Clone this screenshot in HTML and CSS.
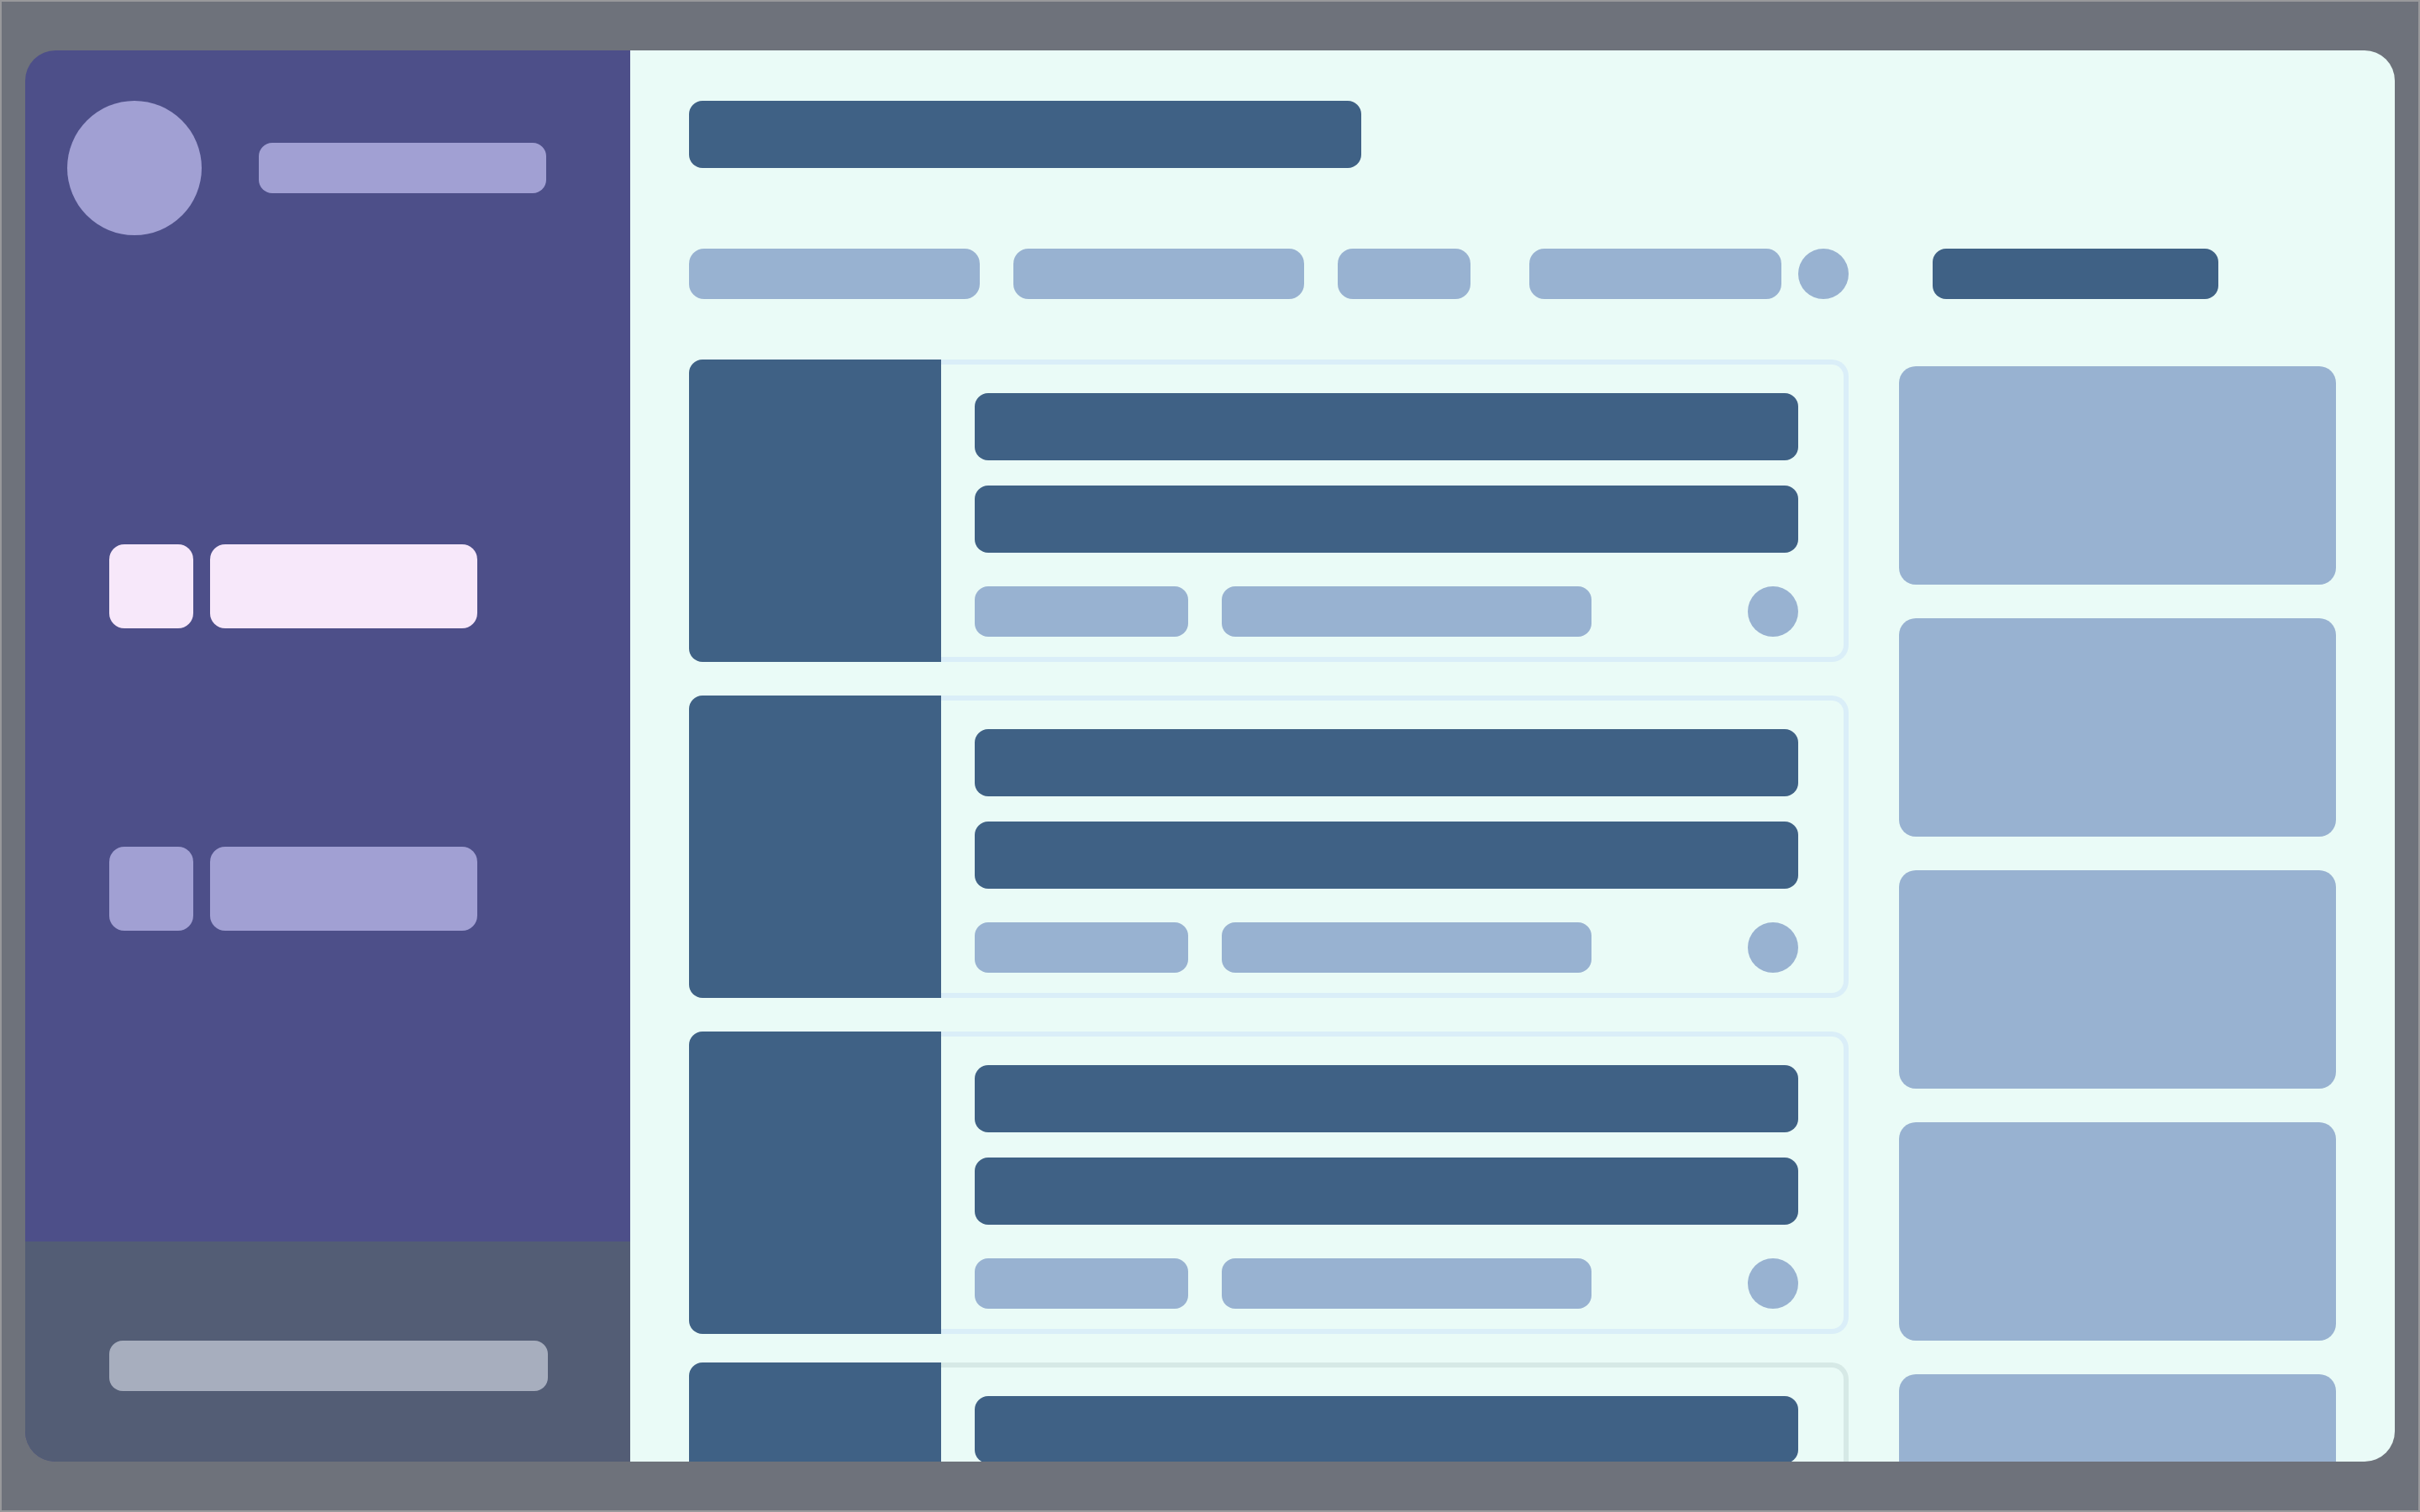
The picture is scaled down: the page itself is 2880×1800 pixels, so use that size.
FILE: index.html
```html
<!doctype html>
<html lang="en">
    <head>
        <meta charset="utf-8" />
        <title>Dashboard</title>
        <link rel="stylesheet" href="styles.css">
    </head>

    <body>
        <div class="app">
            <aside class="sidebar">
                <div class="profile">
                    <div class="avatar"></div>
                    <div class="name-bar"></div>
                </div>

                <nav class="nav">
                    <div class="nav-item active">
                        <div class="nav-icon"></div>
                        <div class="nav-label"></div>
                    </div>
                    <div class="nav-item">
                        <div class="nav-icon"></div>
                        <div class="nav-label"></div>
                    </div>
                </nav>

                <div class="sidebar-footer">
                    <div class="footer-bar"></div>
                </div>
            </aside>

            <main class="main">
                <div class="title-bar"></div>

                <div class="toolbar">
                    <div class="tab tab-wide"></div>
                    <div class="tab tab-wide"></div>
                    <div class="tab tab-small"></div>
                    <div class="tab tab-search"></div>
                    <div class="dot"></div>
                    <div class="action-btn"></div>
                </div>

                <div class="content">
                    <div class="cards">
                        <div class="card">
                            <div class="thumb"></div>
                            <div class="card-body">
                                <div class="line"></div>
                                <div class="line"></div>
                                <div class="meta">
                                    <div class="pill pill-short"></div>
                                    <div class="pill pill-long"></div>
                                    <div class="dot"></div>
                                </div>
                            </div>
                        </div>
                        <div class="card">
                            <div class="thumb"></div>
                            <div class="card-body">
                                <div class="line"></div>
                                <div class="line"></div>
                                <div class="meta">
                                    <div class="pill pill-short"></div>
                                    <div class="pill pill-long"></div>
                                    <div class="dot"></div>
                                </div>
                            </div>
                        </div>
                        <div class="card">
                            <div class="thumb"></div>
                            <div class="card-body">
                                <div class="line"></div>
                                <div class="line"></div>
                                <div class="meta">
                                    <div class="pill pill-short"></div>
                                    <div class="pill pill-long"></div>
                                    <div class="dot"></div>
                                </div>
                            </div>
                        </div>
                        <div class="card card-hover">
                            <div class="thumb"></div>
                            <div class="card-body">
                                <div class="line"></div>
                                <div class="line"></div>
                                <div class="meta">
                                    <div class="pill pill-short"></div>
                                    <div class="pill pill-long"></div>
                                    <div class="dot"></div>
                                </div>
                            </div>
                        </div>
                    </div>

                    <div class="side-panels">
                        <div class="panel"></div>
                        <div class="panel"></div>
                        <div class="panel"></div>
                        <div class="panel"></div>
                        <div class="panel"></div>
                    </div>
                </div>
            </main>
        </div>
    </body>
</html>
```

FILE: styles.css
```css
html,
body {
    margin: 0;
    height: 100%;
}
body {
    box-sizing: border-box;
    border: 2px solid #98989b;
    background-color: #6e727b;
    padding: 58px 28px;
    font-family: "Liberation Sans", Arial, sans-serif;
}
.app {
    display: flex;
    height: 100%;
    border-radius: 36px;
    overflow: hidden;
}

/* sidebar */
.sidebar {
    width: 720px;
    flex: none;
    display: flex;
    flex-direction: column;
    background-color: #4d4f89;
}
.profile {
    display: flex;
    align-items: center;
    gap: 68px;
    padding: 60px 0 0 50px;
}
.avatar {
    width: 160px;
    height: 160px;
    border-radius: 50%;
    background-color: #a1a0d3;
}
.name-bar {
    width: 342px;
    height: 60px;
    border-radius: 16px;
    background-color: #a1a0d3;
}
.nav {
    display: flex;
    flex-direction: column;
    gap: 260px;
    margin-top: 368px;
    padding-left: 100px;
}
.nav-item {
    display: flex;
    gap: 20px;
}
.nav-icon,
.nav-label {
    height: 100px;
    border-radius: 18px;
    background-color: #a1a0d3;
}
.nav-icon {
    width: 100px;
}
.nav-label {
    width: 318px;
}
.nav-item.active .nav-icon,
.nav-item.active .nav-label {
    background-color: #f7e8fa;
}
.sidebar-footer {
    margin-top: auto;
    height: 262px;
    box-sizing: border-box;
    padding: 118px 0 0 100px;
    background-color: #535d75;
}
.footer-bar {
    width: 522px;
    height: 60px;
    border-radius: 16px;
    background-color: #a7aebe;
}

/* main area */
.main {
    flex: 1;
    min-width: 0;
    padding: 60px 70px;
    background-color: #eafbf7;
    overflow: hidden;
}
.title-bar {
    width: 800px;
    height: 80px;
    border-radius: 16px;
    background-color: #3f6185;
}
.toolbar {
    display: flex;
    align-items: center;
    margin-top: 96px;
    height: 60px;
}
.tab {
    height: 60px;
    border-radius: 18px;
    background-color: #98b2d1;
}
.tab-wide {
    width: 346px;
    margin-right: 40px;
}
.tab-small {
    width: 158px;
    margin-right: 70px;
}
.tab-search {
    width: 300px;
    margin-right: 20px;
}
.dot {
    width: 60px;
    height: 60px;
    flex: none;
    border-radius: 50%;
    background-color: #98b2d1;
}
.action-btn {
    width: 340px;
    height: 60px;
    margin-left: 100px;
    border-radius: 16px;
    background-color: #3f6185;
}

.content {
    display: grid;
    grid-template-columns: 1380px 520px;
    gap: 60px;
    margin-top: 72px;
    align-items: start;
}
.cards {
    display: flex;
    flex-direction: column;
    gap: 40px;
}
.card {
    display: flex;
    height: 360px;
}
.thumb {
    width: 300px;
    flex: none;
    border-radius: 16px 0 0 16px;
    background-color: #3f6185;
}
.card-body {
    flex: 1;
    display: flex;
    flex-direction: column;
    gap: 30px;
    padding: 34px 54px 24px 40px;
    border: 6px solid #daeef8;
    border-left: none;
    border-radius: 0 20px 20px 0;
}
.card-hover {
    margin-top: -6px;
}
.card-hover .card-body {
    border-color: #d6e9e6;
}
.line {
    height: 80px;
    border-radius: 16px;
    background-color: #3f6185;
}
.meta {
    display: flex;
    gap: 40px;
    margin-top: 10px;
}
.pill {
    height: 60px;
    border-radius: 16px;
    background-color: #98b2d1;
}
.pill-short {
    width: 254px;
}
.pill-long {
    width: 440px;
}
.meta .dot {
    margin-left: auto;
}

.side-panels {
    display: flex;
    flex-direction: column;
    gap: 40px;
    padding-top: 8px;
}
.panel {
    height: 260px;
    border-radius: 20px;
    background-color: #98b2d1;
}
```
